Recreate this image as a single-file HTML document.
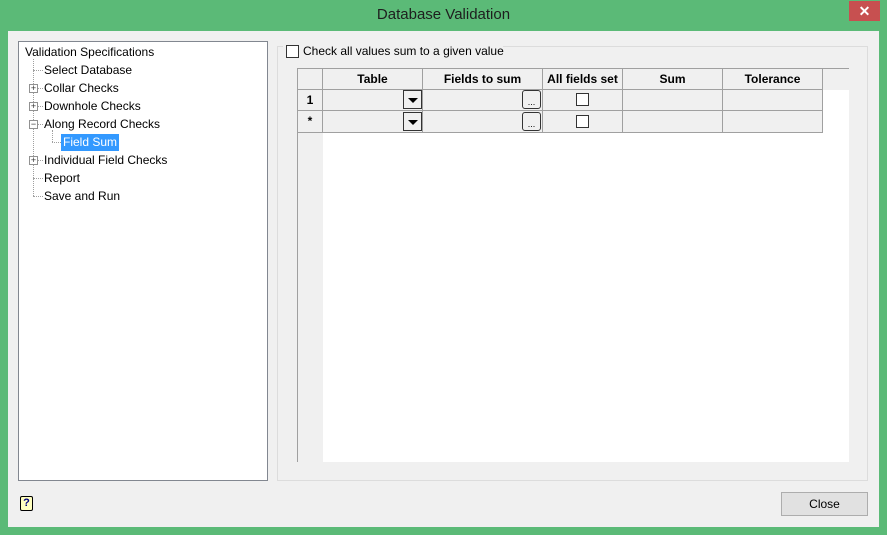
<!DOCTYPE html>
<html><head><style>
*{margin:0;padding:0;box-sizing:border-box}
body{width:887px;height:535px;background:#5bba77;font-family:"Liberation Sans",sans-serif;font-size:12px;color:#000;position:relative;overflow:hidden}
.a{position:absolute}
.title{left:0;top:6px;width:887px;text-align:center;font-size:15px;color:#1e1e1e}
.x{left:849px;top:1px;width:31px;height:20px;background:#c75050;color:#fff;text-align:center;font-size:14px;font-weight:bold;line-height:20px}
.client{left:8px;top:31px;width:871px;height:496px;background:#f0f0f0}
.tree{left:18px;top:41px;width:250px;height:440px;background:#fff;border:1px solid #828790}
.t{position:absolute;white-space:nowrap;font-size:12px}
.dv{position:absolute;border-left:1px dotted #a0a0a0}
.dh{position:absolute;border-top:1px dotted #a0a0a0}
.pm{position:absolute;width:9px;height:9px;border:1px solid #919191;background:#fff;font-size:9px;line-height:7px;text-align:center;color:#333}
.grp{left:277px;top:46px;width:591px;height:435px;border:1px solid #dcdcdc}
.grid{left:297px;top:68px;width:552px;height:394px;background:#fff;border-left:1px solid #a0a0a0;border-top:1px solid #a0a0a0}
.c{position:absolute;border-right:1px solid #a0a0a0;border-bottom:1px solid #a0a0a0;background:#f0f0f0;text-align:center;font-weight:bold;font-size:12px;line-height:20px}
.cb{position:absolute;width:13px;height:13px;border:1px solid #333;background:#fff}
.dd{position:absolute;width:19px;height:19px;border:1px solid #333;background:#f0f0f0}
.dd:after{content:"";position:absolute;left:4px;top:7px;border-left:5px solid transparent;border-right:5px solid transparent;border-top:5px solid #000}
.el{position:absolute;width:19px;height:19px;border:1px solid #333;border-radius:3px;background:#f0f0f0;font-size:9px;text-align:center;line-height:22px}
</style></head><body>
<div class="a title">Database Validation</div>
<div class="a x">✕</div>
<div class="a client"></div>
<div class="a tree">
<div class="t" style="left:6px;top:3px">Validation Specifications</div>
<div class="dv" style="left:14px;top:17px;height:137px"></div>
<div class="dh" style="left:14px;top:28px;width:10px"></div>
<div class="t" style="left:25px;top:21px">Select Database</div>
<div class="dh" style="left:14px;top:46px;width:10px"></div>
<div class="pm" style="left:10px;top:42px">+</div>
<div class="t" style="left:25px;top:39px">Collar Checks</div>
<div class="dh" style="left:14px;top:64px;width:10px"></div>
<div class="pm" style="left:10px;top:60px">+</div>
<div class="t" style="left:25px;top:57px">Downhole Checks</div>
<div class="dh" style="left:14px;top:82px;width:10px"></div>
<div class="pm" style="left:10px;top:78px">−</div>
<div class="t" style="left:25px;top:75px">Along Record Checks</div>
<div class="dv" style="left:33px;top:88px;height:12px"></div>
<div class="dh" style="left:33px;top:100px;width:9px"></div>
<div class="t" style="left:42px;top:92px;background:#3399ff;color:#fff;padding:1px 2px;height:17px">Field Sum</div>
<div class="dh" style="left:14px;top:118px;width:10px"></div>
<div class="pm" style="left:10px;top:114px">+</div>
<div class="t" style="left:25px;top:111px">Individual Field Checks</div>
<div class="dh" style="left:14px;top:136px;width:10px"></div>
<div class="t" style="left:25px;top:129px">Report</div>
<div class="dh" style="left:14px;top:154px;width:10px"></div>
<div class="t" style="left:25px;top:147px">Save and Run</div>
</div>
<div class="a grp"></div>
<div class="a" style="left:283px;top:44px;width:220px;height:14px;background:#f0f0f0"></div>
<div class="cb" style="left:286px;top:45px"></div>
<div class="t" style="left:303px;top:44px">Check all values sum to a given value</div>
<div class="a grid">
<div style="position:absolute;left:0;top:0;width:551px;height:21px;background:#f0f0f0"></div>
<div style="position:absolute;left:0;top:0;width:25px;height:393px;background:#f0f0f0"></div>
<div class="c" style="left:0;top:0;width:25px;height:21px"></div>
<div class="c" style="left:25px;top:0;width:100px;height:21px">Table</div>
<div class="c" style="left:125px;top:0;width:120px;height:21px">Fields to sum</div>
<div class="c" style="left:245px;top:0;width:80px;height:21px">All fields set</div>
<div class="c" style="left:325px;top:0;width:100px;height:21px">Sum</div>
<div class="c" style="left:425px;top:0;width:100px;height:21px">Tolerance</div>
<div class="c" style="left:0;top:21px;width:25px;height:21px">1</div>
<div class="c" style="left:25px;top:21px;width:100px;height:21px"></div>
<div class="c" style="left:125px;top:21px;width:120px;height:21px"></div>
<div class="c" style="left:245px;top:21px;width:80px;height:21px"></div>
<div class="c" style="left:325px;top:21px;width:100px;height:21px"></div>
<div class="c" style="left:425px;top:21px;width:100px;height:21px"></div>
<div class="c" style="left:0;top:42px;width:25px;height:22px">*</div>
<div class="c" style="left:25px;top:42px;width:100px;height:22px"></div>
<div class="c" style="left:125px;top:42px;width:120px;height:22px"></div>
<div class="c" style="left:245px;top:42px;width:80px;height:22px"></div>
<div class="c" style="left:325px;top:42px;width:100px;height:22px"></div>
<div class="c" style="left:425px;top:42px;width:100px;height:22px"></div>
<div class="dd" style="left:105px;top:21px"></div>
<div class="dd" style="left:105px;top:43px"></div>
<div class="el" style="left:224px;top:21px">...</div>
<div class="el" style="left:224px;top:43px">...</div>
<div class="cb" style="left:278px;top:24px"></div>
<div class="cb" style="left:278px;top:46px"></div>
</div>
<div class="a" style="left:20px;top:496px;width:13px;height:15px;border:1px solid #000;border-radius:2px;background:#ffffc0;font-size:11px;font-weight:bold;text-align:center;line-height:13px;color:#000080">?</div>
<div class="a" style="left:781px;top:492px;width:87px;height:24px;border:1px solid #adadad;background:#e1e1e1;text-align:center;line-height:22px">Close</div>
</body></html>
